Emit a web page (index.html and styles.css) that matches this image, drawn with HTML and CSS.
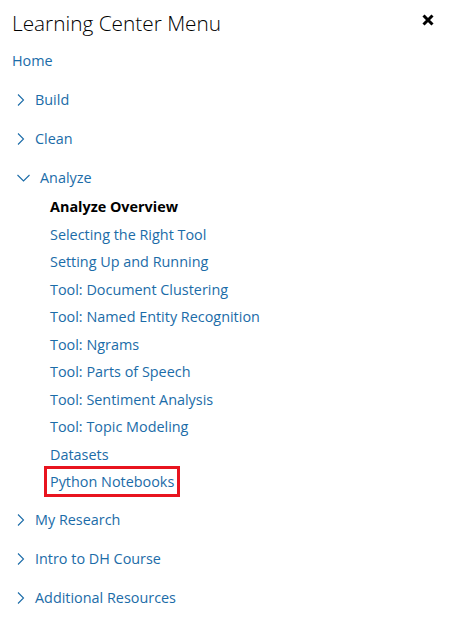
FILE: index.html
```html
<!DOCTYPE html>
<html>
<head>
	<meta charset="utf-8">
	<meta name="viewport" content="width=device-width, initial-scale=1">
	<title>Learning Center Menu</title>
	<link rel="stylesheet" href="styles.css">
</head>
<body>
	<div class="menu">
		<div class="menu-head">
			<h2 class="menu-title">Learning Center Menu</h2>
			<button class="menu-close" aria-label="Close">
				<svg width="12" height="12" viewBox="0 0 12 12"><path d="M1.5 1.5 L10.5 10.5 M10.5 1.5 L1.5 10.5" stroke="#000" stroke-width="3"/></svg>
			</button>
		</div>
		<ul class="menu-list">
			<li class="menu-home"><a href="#">Home</a></li>
			<li class="menu-item">
				<a href="#"><svg class="chev" width="10" height="12" viewBox="0 0 10 12"><path d="M2 0.5 L7.5 6 L2 11.5" fill="none" stroke="#1b6ca8" stroke-width="1.1"/></svg>Build</a>
			</li>
			<li class="menu-item">
				<a href="#"><svg class="chev" width="10" height="12" viewBox="0 0 10 12"><path d="M2 0.5 L7.5 6 L2 11.5" fill="none" stroke="#1b6ca8" stroke-width="1.1"/></svg>Clean</a>
			</li>
			<li class="menu-item open">
				<a href="#"><svg class="chev down" width="15" height="12" viewBox="0 0 15 12"><path d="M1.5 3 L7.5 9 L13.5 3" fill="none" stroke="#1b6ca8" stroke-width="1.1"/></svg>Analyze</a>
				<ul class="sub-list">
					<li class="current">Analyze Overview</li>
					<li><a href="#">Selecting the Right Tool</a></li>
					<li><a href="#">Setting Up and Running</a></li>
					<li><a href="#">Tool: Document Clustering</a></li>
					<li><a href="#">Tool: Named Entity Recognition</a></li>
					<li><a href="#">Tool: Ngrams</a></li>
					<li><a href="#">Tool: Parts of Speech</a></li>
					<li><a href="#">Tool: Sentiment Analysis</a></li>
					<li><a href="#">Tool: Topic Modeling</a></li>
					<li><a href="#">Datasets</a></li>
					<li><a href="#" class="marked">Python Notebooks</a></li>
				</ul>
			</li>
			<li class="menu-item">
				<a href="#"><svg class="chev" width="10" height="12" viewBox="0 0 10 12"><path d="M2 0.5 L7.5 6 L2 11.5" fill="none" stroke="#1b6ca8" stroke-width="1.1"/></svg>My Research</a>
			</li>
			<li class="menu-item">
				<a href="#"><svg class="chev" width="10" height="12" viewBox="0 0 10 12"><path d="M2 0.5 L7.5 6 L2 11.5" fill="none" stroke="#1b6ca8" stroke-width="1.1"/></svg>Intro to DH Course</a>
			</li>
			<li class="menu-item">
				<a href="#"><svg class="chev" width="10" height="12" viewBox="0 0 10 12"><path d="M2 0.5 L7.5 6 L2 11.5" fill="none" stroke="#1b6ca8" stroke-width="1.1"/></svg>Additional Resources</a>
			</li>
		</ul>
	</div>
</body>
</html>
```

FILE: styles.css
```css
body{
	margin: 0;
	background: #fff;
	font-family: "Open Sans", "Liberation Sans", sans-serif;
	font-size: 14.4px;
	color: #000;
}
.menu{
	padding: 8px 12px;
}
.menu-head{
	display: flex;
	justify-content: space-between;
	align-items: flex-start;
}
.menu-title{
	margin: 0;
	font-size: 20.8px;
	font-weight: 300;
	line-height: 30px;
}
.menu-close{
	border: none;
	background: none;
	padding: 0;
	margin: 6px 3px 0 0;
	line-height: 0;
}
.menu-list{
	list-style: none;
	margin: 0;
	padding: 0;
}
.menu-list a{
	color: #1b6ca8;
	text-decoration: none;
}
.menu-home{
	padding-top: 12px;
	line-height: 22px;
}
.menu-item{
	margin-top: 17px;
	line-height: 22px;
}
.menu-item.open + .menu-item{
	margin-top: 13px;
}
.menu-item > a{
	display: flex;
	align-items: center;
}
.chev{
	margin: 0 9px 0 4px;
}
.chev.down{
	margin: 0 9px 0 4px;
}
.sub-list{
	list-style: none;
	margin: 4px 0 0;
	padding: 0 0 0 38px;
}
.sub-list li{
	line-height: 27.5px;
}
.sub-list .current{
	font-weight: 700;
}
.marked{
	outline: 3px solid #e8141f;
	outline-offset: 3px;
}
```
